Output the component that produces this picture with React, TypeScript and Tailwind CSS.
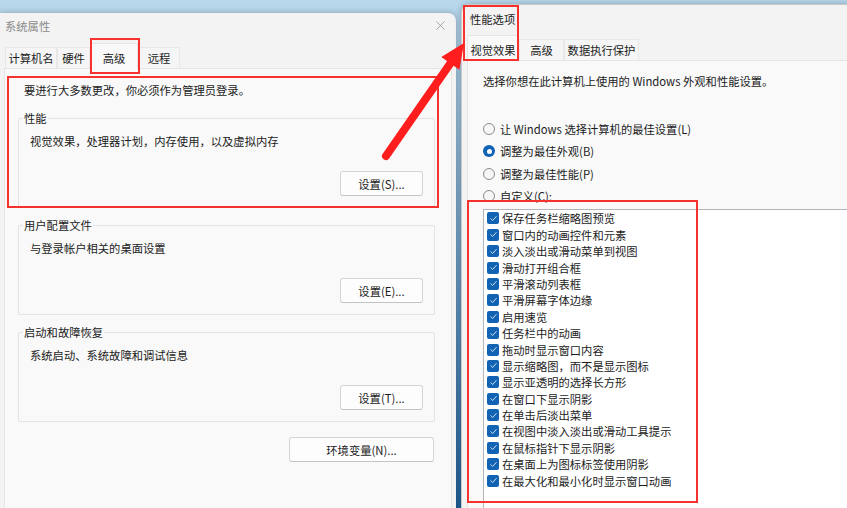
import React from 'react';
import { X } from 'lucide-react';

const font = { fontFamily: '"Noto Sans CJK SC", "Noto Sans", sans-serif' };

const Btn = ({ label, className = '' }: { label: string; className?: string }) => (
    <div className={`h-[25px] flex items-center justify-center bg-[#fdfdfd] border border-[#d5d5d5] border-b-[#c4c4c4] rounded-[3px] text-[11.3px] leading-4 text-[#1b1b1b] ${className}`}>
        {label}
    </div>
);

const Group = ({ title, desc, button }: { title: string; desc: string; button: string }) => (
    <div className="relative h-[90px] border border-[#e3e3e3] rounded-[2px] flex flex-col pt-[14px] pb-[11px] pl-[11px] pr-[11px]">
        <span className="absolute -top-[9px] left-[4px] px-[1px] bg-[#f9f9f9] text-[11.3px] leading-4 text-[#1b1b1b]">{title}</span>
        <div className="text-[11.3px] leading-4 text-[#1b1b1b]">{desc}</div>
        <Btn label={button} className="mt-auto self-end w-[83px]" />
    </div>
);

const Tab = ({ label, active, w }: { label: string; active?: boolean; w: string }) => (
    <div
        className={
            active
                ? `${w} h-[26px] flex items-end justify-center pb-[3px] bg-[#f9f9f9] border-t border-x border-[#e5e5e5] rounded-t-[2px] text-[11.3px] leading-4 text-[#1b1b1b] relative top-[1px]`
                : `${w} h-[21px] flex items-center justify-center bg-[#f5f5f5] border-t border-x border-[#e8e8e8] text-[11.3px] leading-4 text-[#1b1b1b]`
        }
    >
        {label}
    </div>
);

const Radio = ({ label, checked }: { label: string; checked?: boolean }) => (
    <div className="h-[22.3px] flex items-center gap-[5px]">
        {checked ? (
            <span className="w-[12px] h-[12px] rounded-full bg-[#0f63b5] flex items-center justify-center">
                <span className="w-[5px] h-[5px] rounded-full bg-white" />
            </span>
        ) : (
            <span className="w-[12px] h-[12px] rounded-full border border-[#8c8c8c] bg-[#f6f6f6]" />
        )}
        <span className="text-[11.3px] leading-4 text-[#1b1b1b]">{label}</span>
    </div>
);

const checks = [
    '保存任务栏缩略图预览',
    '窗口内的动画控件和元素',
    '淡入淡出或滑动菜单到视图',
    '滑动打开组合框',
    '平滑滚动列表框',
    '平滑屏幕字体边缘',
    '启用速览',
    '任务栏中的动画',
    '拖动时显示窗口内容',
    '显示缩略图，而不是显示图标',
    '显示亚透明的选择长方形',
    '在窗口下显示阴影',
    '在单击后淡出菜单',
    '在视图中淡入淡出或滑动工具提示',
    '在鼠标指针下显示阴影',
    '在桌面上为图标标签使用阴影',
    '在最大化和最小化时显示窗口动画',
];

export default function App() {
    return (
        <div
            className="relative w-[847px] h-[508px] overflow-hidden bg-gradient-to-b from-[#b9d8ec] via-[#6f9ec4] to-[#20609a]"
            style={font}
        >
            {/* 系统属性 window */}
            <div className="absolute left-0 top-[13px] w-[456px] h-[520px] bg-[#f3f3f3] rounded-tr-[8px] shadow-[0_0_6px_rgba(0,0,0,0.25)] flex flex-col">
                <div className="h-[25px] shrink-0 flex items-center justify-between pl-[5px] pr-[8px]">
                    <span className="text-[11.3px] leading-4 text-[#8a8a8a]">系统属性</span>
                    <X size={15} strokeWidth={1.2} className="text-[#8c8c8c]" />
                </div>
                <div className="h-[30px] shrink-0 flex items-end pl-[5px]">
                    <Tab label="计算机名" w="w-[52px]" />
                    <Tab label="硬件" w="w-[33px]" />
                    <Tab label="高级" w="w-[48px]" active />
                    <Tab label="远程" w="w-[42px]" />
                </div>
                <div className="mx-[4px] flex-1 bg-[#f9f9f9] border border-[#e5e5e5] pt-[13px] pl-[13px] pr-[16px] flex flex-col">
                    <div className="pl-[6px] text-[11.3px] leading-4 text-[#1b1b1b]">要进行大多数更改，你必须作为管理员登录。</div>
                    <div className="mt-[20px] flex flex-col gap-[17px]">
                        <Group title="性能" desc="视觉效果，处理器计划，内存使用，以及虚拟内存" button="设置(S)..." />
                        <Group title="用户配置文件" desc="与登录帐户相关的桌面设置" button="设置(E)..." />
                        <Group title="启动和故障恢复" desc="系统启动、系统故障和调试信息" button="设置(T)..." />
                    </div>
                    <Btn label="环境变量(N)..." className="mt-[15px] self-end w-[145px] mr-[1px]" />
                </div>
            </div>

            {/* 性能选项 window */}
            <div className="absolute left-[461px] top-[4px] w-[400px] h-[520px] bg-[#f3f3f3] rounded-tl-[8px] border-l border-t border-[#c9c9c9] shadow-[0_0_6px_rgba(0,0,0,0.25)] flex flex-col">
                <div className="h-[27px] shrink-0 flex items-center pl-[8px]">
                    <span className="text-[11.3px] leading-4 text-[#1b1b1b]">性能选项</span>
                </div>
                <div className="h-[28px] shrink-0 flex items-end pl-[5px]">
                    <Tab label="视觉效果" w="w-[52px]" active />
                    <Tab label="高级" w="w-[45px]" />
                    <Tab label="数据执行保护" w="w-[75px]" />
                </div>
                <div className="ml-[5px] flex-1 bg-[#f9f9f9] border-l border-t border-[#e5e5e5] pt-[12px] pl-[15px] flex flex-col">
                    <div className="text-[11.3px] leading-4 text-[#1b1b1b]">选择你想在此计算机上使用的 Windows 外观和性能设置。</div>
                    <div className="mt-[29px] flex flex-col">
                        <Radio label="让 Windows 选择计算机的最佳设置(L)" />
                        <Radio label="调整为最佳外观(B)" checked />
                        <Radio label="调整为最佳性能(P)" />
                        <Radio label="自定义(C):" />
                    </div>
                    <div className="mt-[2px] flex-1 bg-white border-l border-t border-[#b4b4bc] pl-[3px] pt-[0px] flex flex-col">
                        {checks.map((c) => (
                            <div key={c} className="h-[16.4px] flex items-center gap-[3px]">
                                <span className="w-[12px] h-[12px] rounded-[2px] bg-[#1263b4] flex items-center justify-center">
                                    <svg width="9" height="9" viewBox="0 0 10 10" fill="none">
                                        <path d="M2 5.2 L4.1 7.2 L8 2.8" stroke="#cfe0f3" strokeWidth="1.1" strokeLinecap="round" strokeLinejoin="round" />
                                    </svg>
                                </span>
                                <span className="text-[11.3px] leading-4 text-[#1b1b1b]">{c}</span>
                            </div>
                        ))}
                    </div>
                </div>
            </div>

            {/* red highlight boxes */}
            <div className="absolute left-[7px] top-[76px] w-[432px] h-[132px] border-2 border-[#f7322c] pointer-events-none" />
            <div className="absolute left-[90px] top-[38px] w-[50px] h-[36px] border-2 border-[#f7322c] pointer-events-none" />
            <div className="absolute left-[463px] top-[5px] w-[56px] h-[56px] border-2 border-[#f7322c] pointer-events-none" />
            <div className="absolute left-[467px] top-[200px] w-[231px] h-[303px] border-2 border-[#f7322c] pointer-events-none" />

            {/* red arrow */}
            <svg className="absolute left-0 top-0 pointer-events-none" width="847" height="508" viewBox="0 0 847 508">
                <line x1="386" y1="156" x2="452" y2="61" stroke="#ff1e1e" strokeWidth="8" strokeLinecap="round" />
                <polygon points="464,43 459.4,69.7 441.3,57.1" fill="#ff1e1e" />
            </svg>
        </div>
    );
}
